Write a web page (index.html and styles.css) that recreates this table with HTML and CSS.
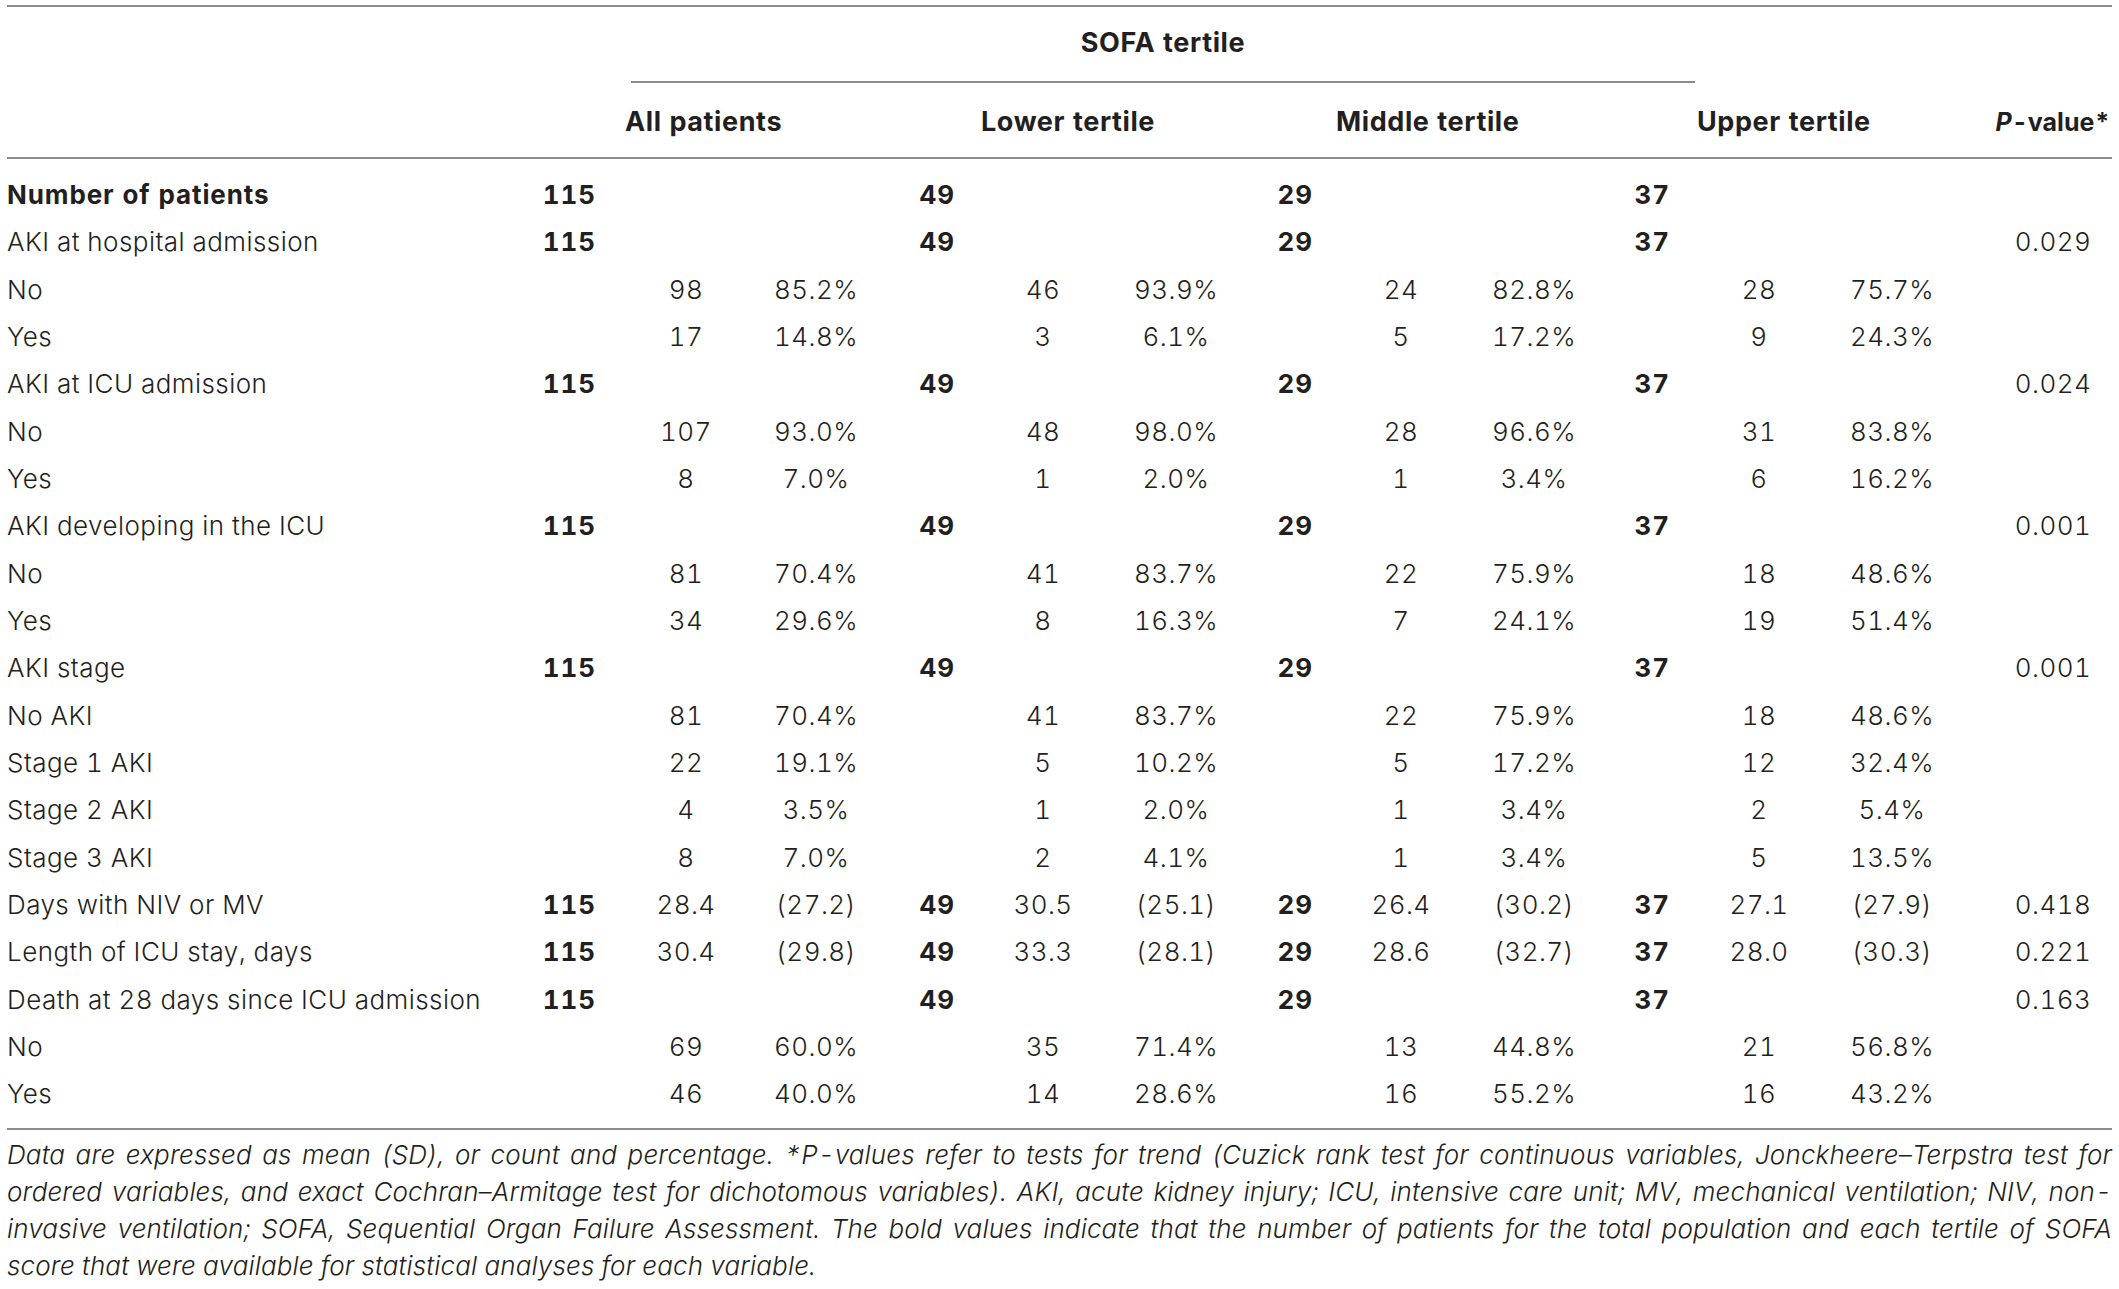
FILE: index.html
```html
<!DOCTYPE html>
<html lang="en">
<head>
<meta charset="utf-8">
<title>SOFA tertile table</title>
<link rel="stylesheet" href="styles.css">
</head>
<body>
<div class="page">
  <div class="table">
    <div class="head">
      <div class="sofa-row"><div class="sofa">SOFA tertile</div></div>
      <div class="group-row">
        <div></div>
        <div class="grp">All patients</div>
        <div class="grp">Lower tertile</div>
        <div class="grp">Middle tertile</div>
        <div class="grp">Upper tertile</div>
        <div class="pv-head"><i>P</i>-value*</div>
      </div>
    </div>
    <div class="body">
      <div class="row"><div class="lab b">Number of patients</div><div class="n">115</div><div></div><div></div><div class="n">49</div><div></div><div></div><div class="n">29</div><div></div><div></div><div class="n">37</div><div></div><div></div><div></div></div>
      <div class="row"><div class="lab">AKI at hospital admission</div><div class="n">115</div><div></div><div></div><div class="n">49</div><div></div><div></div><div class="n">29</div><div></div><div></div><div class="n">37</div><div></div><div></div><div class="pv">0.029</div></div>
      <div class="row"><div class="lab">No</div><div></div><div class="c">98</div><div class="c">85.2%</div><div></div><div class="c">46</div><div class="c">93.9%</div><div></div><div class="c">24</div><div class="c">82.8%</div><div></div><div class="c">28</div><div class="c">75.7%</div><div></div></div>
      <div class="row"><div class="lab">Yes</div><div></div><div class="c">17</div><div class="c">14.8%</div><div></div><div class="c">3</div><div class="c">6.1%</div><div></div><div class="c">5</div><div class="c">17.2%</div><div></div><div class="c">9</div><div class="c">24.3%</div><div></div></div>
      <div class="row"><div class="lab">AKI at ICU admission</div><div class="n">115</div><div></div><div></div><div class="n">49</div><div></div><div></div><div class="n">29</div><div></div><div></div><div class="n">37</div><div></div><div></div><div class="pv">0.024</div></div>
      <div class="row"><div class="lab">No</div><div></div><div class="c">107</div><div class="c">93.0%</div><div></div><div class="c">48</div><div class="c">98.0%</div><div></div><div class="c">28</div><div class="c">96.6%</div><div></div><div class="c">31</div><div class="c">83.8%</div><div></div></div>
      <div class="row"><div class="lab">Yes</div><div></div><div class="c">8</div><div class="c">7.0%</div><div></div><div class="c">1</div><div class="c">2.0%</div><div></div><div class="c">1</div><div class="c">3.4%</div><div></div><div class="c">6</div><div class="c">16.2%</div><div></div></div>
      <div class="row"><div class="lab">AKI developing in the ICU</div><div class="n">115</div><div></div><div></div><div class="n">49</div><div></div><div></div><div class="n">29</div><div></div><div></div><div class="n">37</div><div></div><div></div><div class="pv">0.001</div></div>
      <div class="row"><div class="lab">No</div><div></div><div class="c">81</div><div class="c">70.4%</div><div></div><div class="c">41</div><div class="c">83.7%</div><div></div><div class="c">22</div><div class="c">75.9%</div><div></div><div class="c">18</div><div class="c">48.6%</div><div></div></div>
      <div class="row"><div class="lab">Yes</div><div></div><div class="c">34</div><div class="c">29.6%</div><div></div><div class="c">8</div><div class="c">16.3%</div><div></div><div class="c">7</div><div class="c">24.1%</div><div></div><div class="c">19</div><div class="c">51.4%</div><div></div></div>
      <div class="row"><div class="lab">AKI stage</div><div class="n">115</div><div></div><div></div><div class="n">49</div><div></div><div></div><div class="n">29</div><div></div><div></div><div class="n">37</div><div></div><div></div><div class="pv">0.001</div></div>
      <div class="row"><div class="lab">No AKI</div><div></div><div class="c">81</div><div class="c">70.4%</div><div></div><div class="c">41</div><div class="c">83.7%</div><div></div><div class="c">22</div><div class="c">75.9%</div><div></div><div class="c">18</div><div class="c">48.6%</div><div></div></div>
      <div class="row"><div class="lab">Stage 1 AKI</div><div></div><div class="c">22</div><div class="c">19.1%</div><div></div><div class="c">5</div><div class="c">10.2%</div><div></div><div class="c">5</div><div class="c">17.2%</div><div></div><div class="c">12</div><div class="c">32.4%</div><div></div></div>
      <div class="row"><div class="lab">Stage 2 AKI</div><div></div><div class="c">4</div><div class="c">3.5%</div><div></div><div class="c">1</div><div class="c">2.0%</div><div></div><div class="c">1</div><div class="c">3.4%</div><div></div><div class="c">2</div><div class="c">5.4%</div><div></div></div>
      <div class="row"><div class="lab">Stage 3 AKI</div><div></div><div class="c">8</div><div class="c">7.0%</div><div></div><div class="c">2</div><div class="c">4.1%</div><div></div><div class="c">1</div><div class="c">3.4%</div><div></div><div class="c">5</div><div class="c">13.5%</div><div></div></div>
      <div class="row"><div class="lab">Days with NIV or MV</div><div class="n">115</div><div class="c">28.4</div><div class="c">(27.2)</div><div class="n">49</div><div class="c">30.5</div><div class="c">(25.1)</div><div class="n">29</div><div class="c">26.4</div><div class="c">(30.2)</div><div class="n">37</div><div class="c">27.1</div><div class="c">(27.9)</div><div class="pv">0.418</div></div>
      <div class="row"><div class="lab">Length of ICU stay, days</div><div class="n">115</div><div class="c">30.4</div><div class="c">(29.8)</div><div class="n">49</div><div class="c">33.3</div><div class="c">(28.1)</div><div class="n">29</div><div class="c">28.6</div><div class="c">(32.7)</div><div class="n">37</div><div class="c">28.0</div><div class="c">(30.3)</div><div class="pv">0.221</div></div>
      <div class="row"><div class="lab">Death at 28 days since ICU admission</div><div class="n">115</div><div></div><div></div><div class="n">49</div><div></div><div></div><div class="n">29</div><div></div><div></div><div class="n">37</div><div></div><div></div><div class="pv">0.163</div></div>
      <div class="row"><div class="lab">No</div><div></div><div class="c">69</div><div class="c">60.0%</div><div></div><div class="c">35</div><div class="c">71.4%</div><div></div><div class="c">13</div><div class="c">44.8%</div><div></div><div class="c">21</div><div class="c">56.8%</div><div></div></div>
      <div class="row"><div class="lab">Yes</div><div></div><div class="c">46</div><div class="c">40.0%</div><div></div><div class="c">14</div><div class="c">28.6%</div><div></div><div class="c">16</div><div class="c">55.2%</div><div></div><div class="c">16</div><div class="c">43.2%</div><div></div></div>
    </div>
  </div>
  <div class="note">
    <span class="line">Data are expressed as mean (SD), or count and percentage. *P-values refer to tests for trend (Cuzick rank test for continuous variables, Jonckheere–Terpstra test for</span>
    <span class="line">ordered variables, and exact Cochran–Armitage test for dichotomous variables). AKI, acute kidney injury; ICU, intensive care unit; MV, mechanical ventilation; NIV, non-</span>
    <span class="line">invasive ventilation; SOFA, Sequential Organ Failure Assessment. The bold values indicate that the number of patients for the total population and each tertile of SOFA</span>
    <span class="line last">score that were available for statistical analyses for each variable.</span>
  </div>
</div>
</body>
</html>
```

FILE: styles.css
```css
html, body {
  margin: 0;
  padding: 0;
  background: #ffffff;
}

body {
  font-family: Inter, "Liberation Sans", "DejaVu Sans", sans-serif;
  color: #231f20;
  font-weight: 300;
  font-size: 26px;
  letter-spacing: 0.45px;
  font-variant-numeric: tabular-nums;
}

.page {
  width: 2105px;
  padding: 5px 0 0 7px;
}

.table {
  border-top: 2px solid #8c8c8c;
  border-bottom: 2px solid #8c8c8c;
}

/* header */
.head {
  font-weight: 700;
  font-size: 27px;
  letter-spacing: 0.6px;
}

.sofa-row {
  padding-left: 624px;
}

.sofa {
  width: 1064px;
  height: 74px;
  line-height: 72px;
  text-align: center;
  border-bottom: 2px solid #8c8c8c;
}

.group-row {
  display: grid;
  grid-template-columns: 618px 356px 355px 361px 238px 177px;
  height: 74px;
  line-height: 78px;
  border-bottom: 2px solid #8c8c8c;
  white-space: nowrap;
}

.pv-head {
  padding-left: 59px;
  text-align: center;
  font-size: 25px;
  letter-spacing: 0;
}

/* body */
.body {
  padding: 12px 0 10px;
}

.row {
  display: grid;
  grid-template-columns: 513px 75px 182px 78px 99px 178px 88px 92px 178px 88px 91px 180px 86px 177px;
  height: 47.33px;
  line-height: 47.33px;
  white-space: nowrap;
}

.lab.b,
.n {
  font-weight: 700;
  letter-spacing: 0.9px;
}

.n {
  justify-self: end;
  margin-right: -0.9px;
}

.c {
  justify-self: center;
}

.pv {
  padding-left: 59px;
  text-align: center;
}

/* footnote */
.note {
  margin-top: 6px;
  font-style: italic;
  font-size: 26px;
  letter-spacing: 0.15px;
  line-height: 37px;
}

.line {
  display: block;
  text-align: justify;
  text-align-last: justify;
  white-space: nowrap;
}

.line.last {
  text-align-last: left;
}
```
